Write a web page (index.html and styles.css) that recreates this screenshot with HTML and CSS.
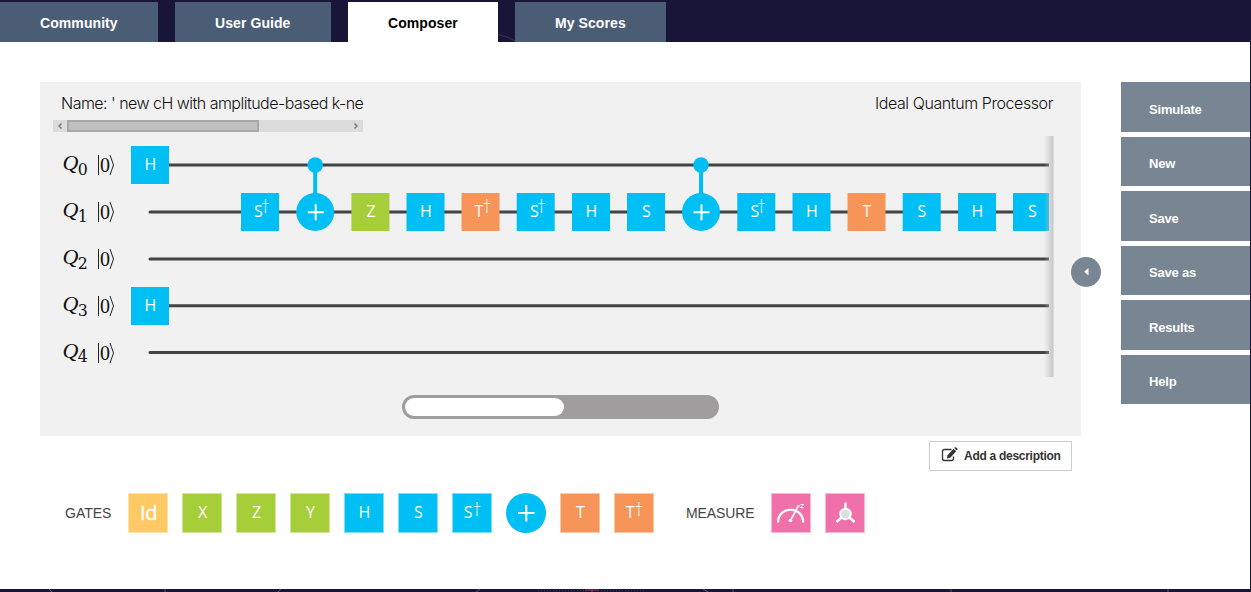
FILE: index.html
```
<!DOCTYPE html>
<html lang="en">
<head>
<meta charset="utf-8">
<title>Composer</title>
<link rel="stylesheet" href="styles.css">
</head>
<body>
<nav class="tabs">
  <a class="tab">Community</a>
  <a class="tab">User Guide</a>
  <a class="tab active">Composer</a>
  <svg class="arc" width="17" height="8" viewBox="0 0 17 8"><path d="M0 .5Q9 2 17 7"/></svg>
  <a class="tab">My Scores</a>
</nav>
<main class="page">
  <div class="work">
    <section class="panel">
      <header class="panel-head">
        <div class="name-box">
          <div class="name">Name: ' new cH with amplitude-based k-ne</div>
          <div class="hscroll">
            <svg width="14" height="12"><path d="M8.5 3.5L6 6l2.500 2.500"/></svg>
            <span class="hthumb"></span>
            <svg width="14" height="12"><path d="M5.500 3.500L8 6L5.500 8.500"/></svg>
          </div>
        </div>
        <div class="processor">Ideal Quantum Processor</div>
      </header>
      <svg class="score" width="1014" height="242" viewBox="40 136 1014 242">
        <defs>
          <linearGradient id="edge"><stop offset="0" stop-color="#bbb" stop-opacity="0"/><stop offset="1" stop-color="#bbb" stop-opacity=".8"/></linearGradient>
          <g id="cnot"><path class="link" d="M0-47V0"/><circle class="blue" cy="-47" r="7.800"/><circle class="blue" r="19"/><path class="plus" d="M-7.500 .3H8.500M.5-7.700V8.300"/></g>
          <clipPath id="view"><path d="M40 136h1009v242H40z"/></clipPath>
        </defs>
        <g class="wires" clip-path="url(#view)">
          <path d="M150 165H1052M150 212H1052M150 258.900H1052M150 305.800H1052M150 352.600H1052"/>
        </g>
        <g class="qubits">
          <text class="q" x="62.500" y="170">Q</text><text class="n" x="77.700" y="175">0</text><text class="ket" x="100" y="171.500">0</text>
          <text class="q" x="62.500" y="217">Q</text><text class="n" x="77.700" y="222">1</text><text class="ket" x="100" y="218.500">0</text>
          <text class="q" x="62.500" y="264">Q</text><text class="n" x="77.700" y="269">2</text><text class="ket" x="100" y="265.500">0</text>
          <text class="q" x="62.500" y="311">Q</text><text class="n" x="77.700" y="316">3</text><text class="ket" x="100" y="312.500">0</text>
          <text class="q" x="62.500" y="358">Q</text><text class="n" x="77.700" y="362">4</text><text class="ket" x="100" y="359.500">0</text>
          <path class="bra" d="M98.500 155v20M110 155l3.500 10-3.500 10M98.500 202v20M110 202l3.500 10-3.500 10M98.500 249v20M110 249l3.500 10-3.500 10M98.500 296v20M110 296l3.500 10-3.500 10M98.500 343v20M110 343l3.500 10-3.500 10"/>
        </g>
        <g class="gates" clip-path="url(#view)">
          <path class="blue" d="M131 146h38v38h-38zM131 287h38v38h-38zM241 193h38v38h-38zM406.500 193h38v38h-38zM516.700 193h38v38h-38zM572 193h38v38h-38zM627 193h38v38h-38zM737.300 193h38v38h-38zM792.500 193h38v38h-38zM902.700 193h38v38h-38zM958 193h38v38h-38zM1013 193h38v38h-38z"/>
          <path class="green" d="M351.400 193h38v38h-38z"/>
          <path class="orange" d="M461.500 193h38v38h-38zM847.500 193h38v38h-38z"/>
          <use href="#cnot" x="315.200" y="212"/><use href="#cnot" x="701" y="212"/>
          <text x="150.300" y="170.400">H</text><text x="150.300" y="311.400">H</text>
          <text x="258.500" y="217.400">S</text><text class="dag" x="265.500" y="213">†</text>
          <text x="371" y="217.400">Z</text><text x="426" y="217.400">H</text>
          <text x="479" y="217.400">T</text><text class="dag" x="487" y="213">†</text>
          <text x="534.500" y="217.400">S</text><text class="dag" x="541.500" y="213">†</text>
          <text x="591.300" y="217.400">H</text><text x="646.500" y="217.400">S</text>
          <text x="755" y="217.400">S</text><text class="dag" x="761.500" y="213">†</text>
          <text x="812" y="217.400">H</text><text x="867" y="217.400">T</text><text x="922" y="217.400">S</text><text x="977.300" y="217.400">H</text><text x="1032.500" y="217.400">S</text>
        </g>
        <path fill="url(#edge)" d="M1044 136h9.500v241h-9.500z"/>
      </svg>
      <div class="slider"><span class="slider-thumb"></span></div>
      <div class="toggle"><svg width="30" height="30"><path d="M17.500 11v7.500L13.200 14.700z"/></svg></div>
    </section>
    <div class="under">
      <button class="describe">
        <svg width="18" height="16" viewBox="0 0 18 16"><path class="note" d="M10.500 2.500H3.500Q1.500 2.500 1.500 4.500V11.500Q1.500 13.500 3.500 13.500H10.500Q12.500 13.500 12.500 11.500V9.500"/><path class="pen" d="M12.500 1.800l2.700 2.500-6 6.400-3.200.8.500-3.300zM13.200 1l1-.8q.5-.2 1 .2l1.300 1.300q.3.500 0 .9l-.8.9z"/></svg>
        Add a description
      </button>
    </div>
    <div class="palette">
      <span class="label gates-label">GATES</span>
      <div class="tiles">
        <span class="tile yellow">Id</span>
        <span class="tile lime">X</span>
        <span class="tile lime">Z</span>
        <span class="tile lime">Y</span>
        <span class="tile sky">H</span>
        <span class="tile sky">S</span>
        <span class="tile sky">S<sup>†</sup></span>
        <span class="tile round"><svg width="40" height="40"><path class="plus" d="M12 20H28.500M20.300 12V28.500"/></svg></span>
        <span class="tile coral">T</span>
        <span class="tile coral">T<sup>†</sup></span>
      </div>
      <span class="label measure-label">MEASURE</span>
      <div class="tiles">
        <span class="tile pink"><svg width="38" height="38"><path class="dial" d="M6 28.500C6.200 11.500 31 11.500 31.200 28.500"/><path class="needle" d="M18.500 26.500L26 12.500"/><circle cx="18.500" cy="26.500" r="1.800"/><path class="zed" d="M25 12h3M28.500 10.500h3l-3 3.200h3"/></svg></span>
        <span class="tile pink"><svg width="38" height="38"><path class="legs" d="M19.500 8.500v7M15.500 23.500L10.500 28M23.500 23.500L28.500 28"/><circle class="ball" cx="19.500" cy="20" r="5.200"/></svg></span>
      </div>
    </div>
  </div>
  <aside class="menu">
    <a>Simulate</a><a>New</a><a>Save</a><a>Save as</a><a>Results</a><a>Help</a>
  </aside>
</main>
<svg class="footer" width="1251" height="3" viewBox="0 0 1251 3">
  <path class="faint" d="M49 0l3 3M165 0v3M281 0l-3 3M480 0l-4 3M703 0l5 3M733 0v3M1168 0v3"/>
  <path class="dots" d="M538 1.500H645"/>
  <path class="red" d="M585 1h14M592 0v3M951 0v3"/>
</svg>
</body>
</html>
```
FILE: styles.css
```
* { box-sizing: border-box; }
body {
  margin: 0;
  width: 1251px;
  height: 592px;
  overflow: hidden;
  background: #181539;
  font-family: "Liberation Sans", Arial, sans-serif;
}
svg { display: block; flex: none; }

.tabs { display: flex; height: 42px; padding-top: 2px; }
.tab {
  height: 40px;
  padding: 0 40px;
  margin-right: 17px;
  background: #4b5d74;
  color: #fff;
  font-size: 14px;
  font-weight: bold;
  letter-spacing: .08px;
  line-height: 42px;
  white-space: nowrap;
}
.tab:nth-of-type(1) { width: 158px; }
.tab:nth-of-type(2) { width: 156px; }
.tab:nth-of-type(4) { width: 151px; }
.tab.active { width: 150px; margin-right: 0; background: #fff; color: #000; }
.arc { align-self: flex-end; }
.arc path { fill: none; stroke: #3b3a58; }

.page {
  display: flex;
  justify-content: space-between;
  width: 1250px;
  height: 547px;
  padding: 40px 0 0 40px;
  background: #fff;
}
.work { width: 1041px; }
.panel { position: relative; height: 354px; background: #f1f1f1; }
.panel-head {
  display: flex;
  justify-content: space-between;
  height: 54px;
  padding: 0 28px 0 13px;
  color: #111;
  font-family: Inter, "Liberation Sans", sans-serif;
  font-size: 16px;
  font-weight: 300;
  line-height: 20px;
  white-space: nowrap;
}
.name-box { width: 310px; padding-top: 11px; }
.name { height: 27px; padding-left: 8px; letter-spacing: -0.520px; }
.processor { padding-top: 11px; letter-spacing: -0.420px; }
.hscroll { display: flex; height: 12px; background: #dcdcdc; justify-content: space-between; }
.hscroll path { fill: none; stroke: #777; stroke-width: 1.400; }
.hthumb { width: 192px; margin-right: 90px; background: #bfbfbf; border: 2px solid #a8a8a8; }

.wires path { stroke: #434343; stroke-width: 3; stroke-linecap: round; }
.qubits { fill: #111; }
.q { font: italic 22px "Liberation Serif", serif; }
.n { font: 17.500px "DejaVu Serif Condensed", "DejaVu Serif", serif; font-stretch: condensed; }
.ket { font: 20px "Liberation Serif", serif; }
.bra { fill: none; stroke: #222; stroke-width: 1; }
.blue { fill: #00bff5; }
.green { fill: #a6ce39; }
.orange { fill: #f79558; }
.link { stroke: #00bff5; stroke-width: 4; }
.plus { fill: none; stroke: #fff; stroke-width: 2; }
.gates text { fill: #fff; font: 16px "Open Sans", sans-serif; text-anchor: middle; }
.gates .dag { font-size: 18px; font-weight: 300; }

.slider {
  width: 317px;
  height: 24px;
  margin: 16.500px 0 0 362px;
  padding: 3px;
  border-radius: 12px;
  background: #9f9d9d;
}
.slider-thumb { display: block; width: 159px; height: 18px; border-radius: 9px; background: #fff; }
.toggle {
  position: absolute;
  right: -20px;
  top: 175px;
  border-radius: 50%;
  background: #788592;
}
.toggle path { fill: #fff; }

.under { display: flex; justify-content: flex-end; padding: 5px 9px 0 0; }
.describe {
  display: flex;
  align-items: center;
  gap: 5px;
  width: 143px;
  height: 30px;
  padding: 0 0 0 11px;
  border: 1px solid #ccc;
  background: #fff;
  color: #333;
  font: bold 12px "Liberation Sans", Arial, sans-serif;
  letter-spacing: -0.280px;
  white-space: nowrap;
}
.describe svg { margin-top: -3px; }
.note { fill: none; stroke: #333; stroke-width: 1.300; }
.pen { fill: #333; }

.palette { display: flex; align-items: center; height: 40px; margin-top: 22px; padding-left: 25px; }
.label { color: #444; font-size: 14px; }
.gates-label { width: 63px; }
.measure-label { width: 85px; margin-left: 32px; letter-spacing: -0.100px; }
.tiles { display: flex; gap: 14px; }
.tile {
  display: flex;
  align-items: center;
  justify-content: center;
  width: 40px;
  height: 40px;
  border: 1px solid;
  color: #fff;
  font: 16px "Open Sans", sans-serif;
  padding: 0 0 2px 1px;
}
.tile sup { align-self: flex-start; margin-top: 5px; font-size: 18px; font-weight: 300; line-height: 20px; }
.yellow { background: #ffca65; border-color: #ffe2aa; font-size: 20px; letter-spacing: -0.500px; -webkit-text-stroke: .3px #fff; }
.lime { background: #a6ce39; border-color: #d1e69b; }
.sky { background: #00bff5; border-color: #80dffa; }
.coral { background: #f79558; border-color: #fbc9aa; }
.pink { padding: 0; background: #f071aa; border-color: #f8b8d5; }
.round { padding: 0; border: 0; border-radius: 50%; background: #00bff5; }
.pink path { fill: none; stroke: #fff; }
.pink circle { fill: #fff; }
.dial { stroke-width: 2.200; }
.needle { stroke-width: 1.600; }
.zed { stroke-width: 1; }
.legs { stroke-width: 2.400; }
.pink .ball { fill: #ddd; stroke: #fff; stroke-width: 2; }

.menu { display: flex; flex-direction: column; gap: 5px; width: 129px; }
.menu a {
  height: 49.500px;
  padding-left: 28px;
  background: #788592;
  color: #fff;
  font-size: 13px;
  font-weight: bold;
  letter-spacing: -0.200px;
  line-height: 55px;
}
.menu a:nth-child(even) { line-height: 53px; }
.footer path { fill: none; }
.faint { stroke: #5a5972; }
.dots { stroke: #3b3a58; stroke-dasharray: 1 2; }
.red { stroke: #8a3a48; }
```
